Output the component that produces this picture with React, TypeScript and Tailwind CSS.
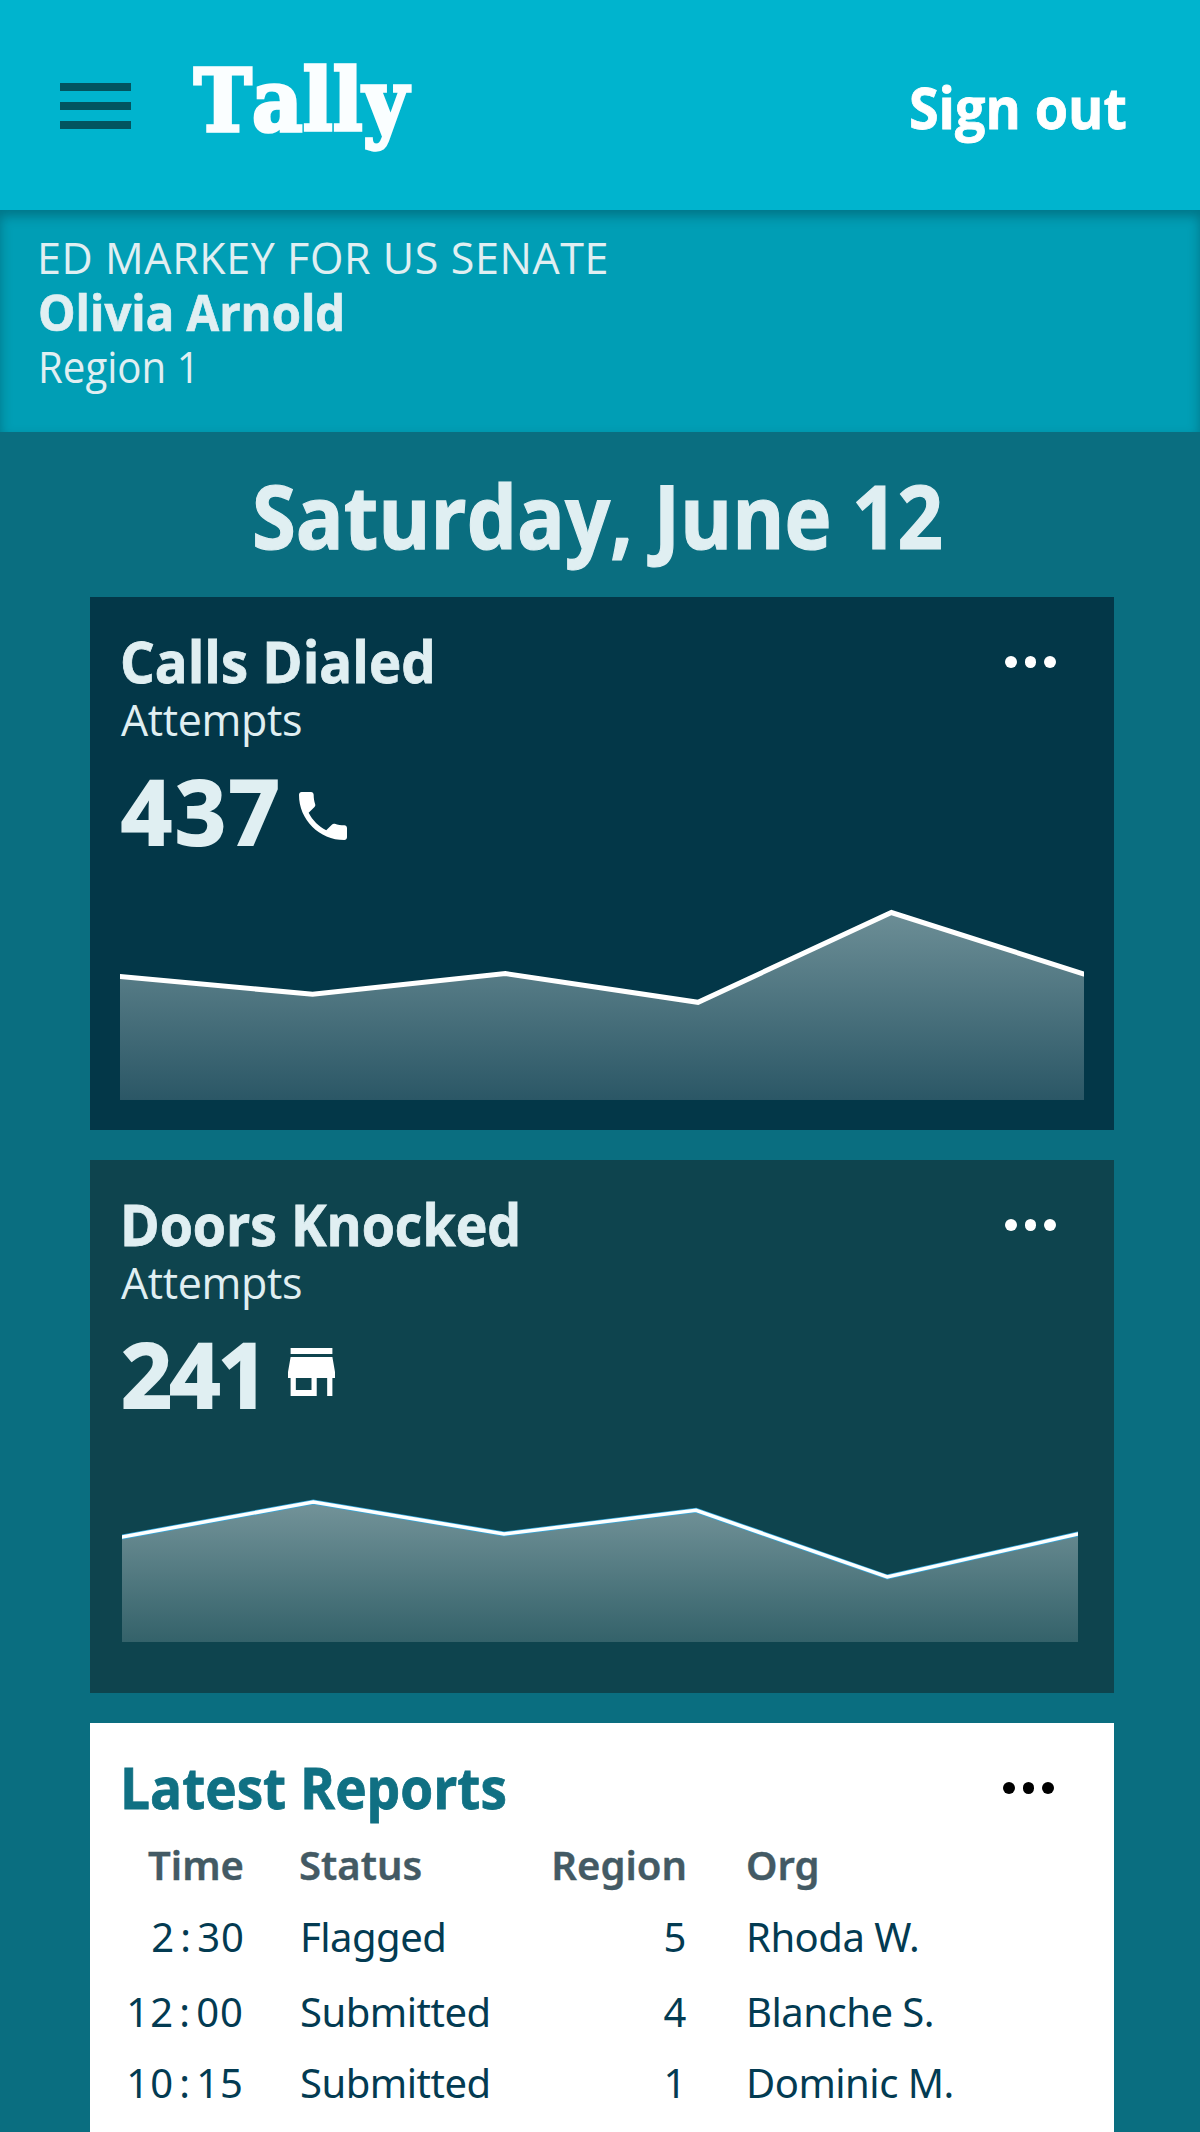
import React from "react";

type Point = [number, number];

function Dots({ className }: { className: string }) {
  return (
    <div className={`flex gap-[8px] ${className}`}>
      <span className="size-[11.6px] rounded-full bg-current" />
      <span className="size-[11.6px] rounded-full bg-current" />
      <span className="size-[11.6px] rounded-full bg-current" />
    </div>
  );
}

function PhoneIcon() {
  return (
    <svg viewBox="3 3 18 18" className="ml-[16px] mt-[26px] size-[48px] shrink-0" fill="#fff">
      <path d="M6.62 10.79c1.44 2.83 3.76 5.14 6.59 6.59l2.2-2.2c.27-.27.67-.36 1.02-.24 1.12.37 2.33.57 3.57.57.55 0 1 .45 1 1V20c0 .55-.45 1-1 1-9.39 0-17-7.61-17-17 0-.55.45-1 1-1h3.5c.55 0 1 .45 1 1 0 1.25.2 2.45.57 3.57.11.35.03.74-.25 1.02l-2.2 2.2z" />
    </svg>
  );
}

function StoreIcon() {
  return (
    <svg
      viewBox="3 4 18 16"
      preserveAspectRatio="none"
      className="ml-[22px] mt-[19px] h-[48px] w-[47px] shrink-0"
      fill="#fff"
    >
      <path d="M20 4H4v2h16V4zm1 10v-2l-1-5H4l-1 5v2h1v6h10v-6h4v6h2v-6h1zm-9 4H6v-4h6v4z" />
    </svg>
  );
}

function AreaChart({
  id,
  points,
  base,
  top,
  bottom,
  edge,
}: {
  id: string;
  points: Point[];
  base: number;
  top: string;
  bottom: string;
  edge?: string;
}) {
  const line = points.map((p) => p.join(",")).join(" ");
  const left = points[0][0];
  const right = points[points.length - 1][0];
  const peak = Math.min(...points.map((p) => p[1]));
  const first: Point = [
    left - 10,
    points[0][1] - (10 * (points[1][1] - points[0][1])) / (points[1][0] - left),
  ];
  const n = points.length;
  const last: Point = [
    right + 10,
    points[n - 1][1] + (10 * (points[n - 1][1] - points[n - 2][1])) / (right - points[n - 2][0]),
  ];
  const stroke = `${first.join(",")} ${line} ${last.join(",")}`;
  return (
    <svg viewBox="0 0 1024 275" className="block h-[275px] w-full">
      <defs>
        <linearGradient id={`${id}-fill`} gradientUnits="userSpaceOnUse" x1="0" x2="0" y1={peak} y2={base}>
          <stop offset="0" stopColor={top} />
          <stop offset="1" stopColor={bottom} />
        </linearGradient>
        <clipPath id={`${id}-clip`}>
          <rect x={left} y="0" width={right - left} height={base} />
        </clipPath>
      </defs>
      <g clipPath={`url(#${id}-clip)`}>
        <polygon points={`${left},${base} ${line} ${right},${base}`} fill={`url(#${id}-fill)`} />
        {edge && <polyline points={stroke} fill="none" stroke={edge} strokeWidth="5" />}
        <polyline points={stroke} fill="none" stroke="#fff" strokeWidth={edge ? 3.6 : 5} />
      </g>
    </svg>
  );
}

const calls: Point[] = [
  [30, 121.5],
  [222.6, 139.3],
  [415.3, 118.5],
  [608, 147.3],
  [801.4, 57.5],
  [994, 119],
];

const doors: Point[] = [
  [31.9, 119],
  [223.3, 84],
  [414, 116],
  [606, 92.3],
  [797.3, 159],
  [988, 116],
];

const reports = [
  { h: "2", m: "30", status: "Flagged", region: 5, org: "Rhoda W.", row: "h-[75px]", pad: "pr-[1px]" },
  { h: "12", m: "00", status: "Submitted", region: 4, org: "Blanche S.", row: "h-[71px]", pad: "pr-[2px]" },
  { h: "10", m: "15", status: "Submitted", region: 1, org: "Dominic M.", row: "h-[71px]", pad: "pr-[2px]" },
];

export default function App() {
  return (
    <div className="flex h-[2132px] w-[1200px] flex-col overflow-hidden bg-[#0a6e80] font-['Open_Sans',sans-serif] text-[#e0eff2]">
      <header className="flex h-[210px] shrink-0 items-center bg-[#00b4ce] text-white">
        <button className="ml-[60px] mt-[1px] flex w-[71px] flex-col gap-[11px]" aria-label="Menu">
          <span className="h-[8px] w-full bg-[#02545f]" />
          <span className="h-[8px] w-full bg-[#02545f]" />
          <span className="h-[8px] w-full bg-[#02545f]" />
        </button>
        <div className="mb-[8px] ml-[63px] font-['DejaVu_Serif_Condensed','DejaVu_Serif',serif] text-[86px] font-bold leading-[110px] tracking-[0.6px] text-[#fafeff] [-webkit-text-stroke:3.5px_#fafeff] [font-kerning:none]">
          Tally
        </div>
        <button className="ml-auto mr-[73px] mt-[3px] origin-right scale-x-[0.944] whitespace-nowrap text-[57px] font-bold leading-[70px] [-webkit-text-stroke:0.8px_#fff]">
          Sign out
        </button>
      </header>

      <section className="h-[222px] shrink-0 bg-[#009eb5] pl-[37px] pt-[21px] shadow-[inset_0_6px_12px_rgba(0,50,60,0.38)]">
        <div className="text-[43px] leading-[54px] tracking-[0.6px]">ED MARKEY FOR US SENATE</div>
        <div className="ml-[1px] origin-left scale-x-[0.945] text-[50px] font-bold leading-[54px] [-webkit-text-stroke:0.7px_#e0eff2]">
          Olivia Arnold
        </div>
        <div className="ml-[1px] mt-[1px] origin-left scale-x-[0.935] text-[43px] leading-[54px]">Region 1</div>
      </section>

      <main className="px-[90px] pt-[28px]">
        <h1 className="ml-[162px] w-max origin-left scale-x-[0.914] text-[87px] font-bold leading-[110px] [-webkit-text-stroke:1.2px_#e0eff2]">
          Saturday, June 12
        </h1>

        <div className="mt-[27px] flex w-[1024px] flex-col gap-[30px]">
          <article className="h-[533px] bg-[#033748]">
            <div className="flex justify-between pl-[30px] pr-[58px] pt-[32px]">
              <h2 className="origin-left scale-x-[0.957] text-[57px] font-bold leading-[64px] [-webkit-text-stroke:0.8px_#e0eff2]">
                Calls Dialed
              </h2>
              <Dots className="mt-[27px] text-white" />
            </div>
            <div className="ml-[31px] mt-[2px] text-[43px] leading-[50px] tracking-[-0.35px]">Attempts</div>
            <div className="mt-[21px] flex h-[89px] pl-[31px]">
              <div className="text-[89px] font-bold leading-[90px] tracking-[3px] [-webkit-text-stroke:2px_#e0eff2]">437</div>
              <PhoneIcon />
            </div>
            <AreaChart id="calls" points={calls} base={245} top="#6c8e96" bottom="#2b5766" />
          </article>

          <article className="h-[533px] bg-[#0e444e]">
            <div className="flex justify-between pl-[30px] pr-[58px] pt-[32px]">
              <h2 className="origin-left scale-x-[0.94] text-[57px] font-bold leading-[64px] [-webkit-text-stroke:0.8px_#e0eff2]">
                Doors Knocked
              </h2>
              <Dots className="mt-[27px] text-white" />
            </div>
            <div className="ml-[31px] mt-[2px] text-[43px] leading-[50px] tracking-[-0.35px]">Attempts</div>
            <div className="mt-[21px] flex h-[89px] pl-[31px]">
              <div className="text-[89px] font-bold leading-[90px] tracking-[-2.5px] [-webkit-text-stroke:2px_#e0eff2]">241</div>
              <StoreIcon />
            </div>
            <AreaChart id="doors" points={doors} base={224} top="#739399" bottom="#34626a" edge="#35a8dc" />
          </article>

          <article className="h-[500px] bg-white text-[#033b52]">
            <div className="flex justify-between pl-[30px] pr-[60px] pt-[32px]">
              <h2 className="origin-left scale-x-[0.917] text-[58px] font-bold leading-[64px] text-[#107083] [-webkit-text-stroke:0.8px_#107083]">
                Latest Reports
              </h2>
              <Dots className="mt-[27px] text-black" />
            </div>
            <div className="mt-[16px] pl-[30px] font-['Noto_Sans',sans-serif] text-[40px] leading-[60px] tracking-[-0.5px]">
              <div className="grid h-[72px] grid-cols-[126px_253px_188px_1fr] font-semibold tracking-normal text-[#435a64] [-webkit-text-stroke:0.4px_#435a64]">
                <div className="pr-[2px] text-right">Time</div>
                <div className="pl-[53px]">Status</div>
                <div className="text-right">Region</div>
                <div className="pl-[59px]">Org</div>
              </div>
              {reports.map((r) => (
                <div key={r.org} className={`grid grid-cols-[126px_253px_188px_1fr] ${r.row}`}>
                  <div className={`text-right tracking-[1px] ${r.pad}`}>
                    {r.h}
                    <span className="mx-[5.2px]">:</span>
                    {r.m}
                  </div>
                  <div className="pl-[54px]">{r.status}</div>
                  <div className="pr-[1px] text-right">{r.region}</div>
                  <div className="pl-[59px]">{r.org}</div>
                </div>
              ))}
            </div>
          </article>
        </div>
      </main>
    </div>
  );
}
